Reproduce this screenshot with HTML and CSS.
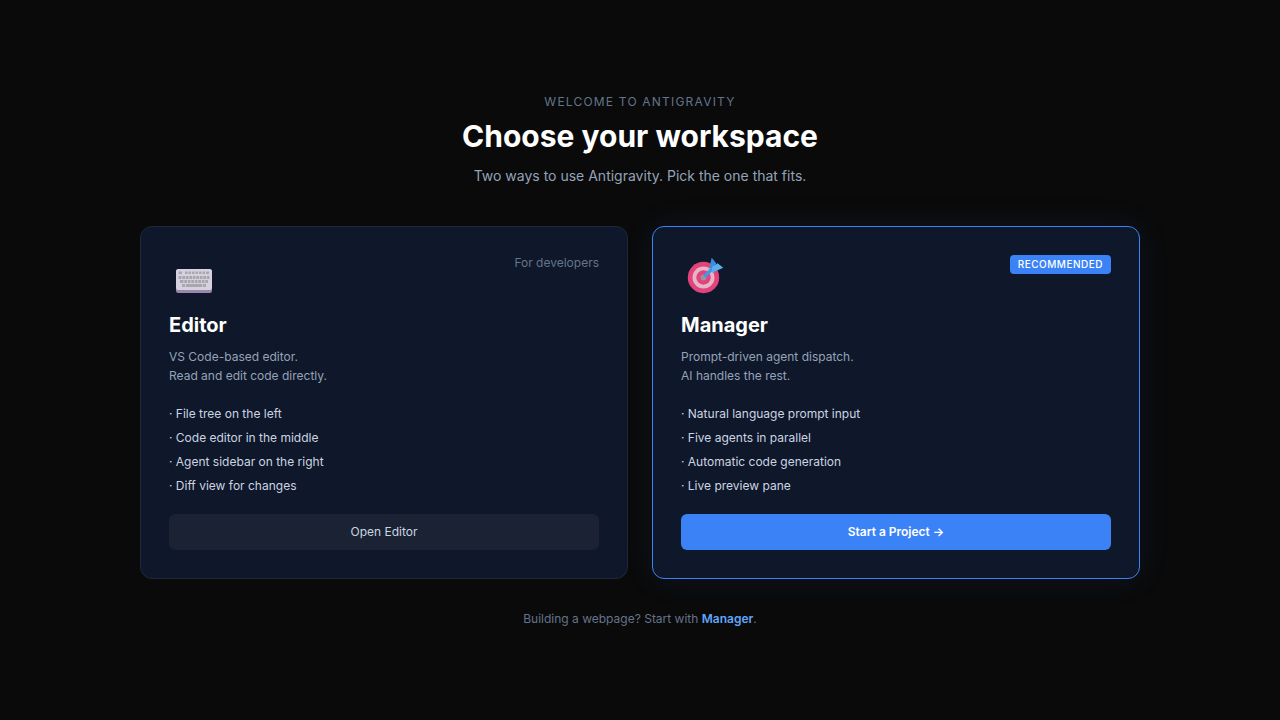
FILE: index.html
```html
<!DOCTYPE html>
<html lang="en">
<head>
<meta charset="utf-8">
<title>Choose your workspace</title>
<link rel="stylesheet" href="styles.css">
</head>
<body>
<main class="page">
  <header class="head">
    <p class="eyebrow">WELCOME TO ANTIGRAVITY</p>
    <h1 class="title">Choose your workspace</h1>
    <p class="sub">Two ways to use Antigravity. Pick the one that fits.</p>
  </header>
  <section class="cards">
    <article class="card">
      <div class="card-top">
        <svg class="icon" viewBox="0 0 44 44" aria-hidden="true">
          <rect x="7" y="14" width="36" height="24" rx="2.5" fill="#9a88ac"/>
          <rect x="7" y="14" width="36" height="21" rx="2.5" fill="#d6d1df"/>
          <g fill="#a9a6ae">
            <rect x="9.5" y="16.5" width="3.5" height="2.5"/><rect x="16" y="16.5" width="2.5" height="2.5"/><rect x="19.5" y="16.5" width="2.5" height="2.5"/><rect x="23" y="16.5" width="2.5" height="2.5"/><rect x="26.5" y="16.5" width="2.5" height="2.5"/><rect x="30" y="16.5" width="2.5" height="2.5"/><rect x="33.5" y="16.5" width="2.5" height="2.5"/><rect x="37" y="16.5" width="3" height="2.5"/>
            <rect x="9.5" y="21" width="31" height="3"/>
            <rect x="11" y="25" width="28" height="3"/>
            <rect x="13" y="29" width="24" height="3"/>
          </g>
          <g fill="#d6d1df">
            <rect x="12.5" y="21" width=".8" height="3"/><rect x="16" y="21" width=".8" height="3"/><rect x="19.5" y="21" width=".8" height="3"/><rect x="23" y="21" width=".8" height="3"/><rect x="26.5" y="21" width=".8" height="3"/><rect x="30" y="21" width=".8" height="3"/><rect x="33.5" y="21" width=".8" height="3"/><rect x="37" y="21" width=".8" height="3"/>
            <rect x="14.5" y="25" width=".8" height="3"/><rect x="18" y="25" width=".8" height="3"/><rect x="21.5" y="25" width=".8" height="3"/><rect x="25" y="25" width=".8" height="3"/><rect x="28.5" y="25" width=".8" height="3"/><rect x="32" y="25" width=".8" height="3"/><rect x="35.5" y="25" width=".8" height="3"/>
            <rect x="16" y="29" width=".8" height="3"/><rect x="33" y="29" width=".8" height="3"/>
          </g>
        </svg>
        <span class="tag">For developers</span>
      </div>
      <h2 class="name">Editor</h2>
      <p class="desc">VS Code-based editor.<br>Read and edit code directly.</p>
      <ul class="list">
        <li>· File tree on the left</li>
        <li>· Code editor in the middle</li>
        <li>· Agent sidebar on the right</li>
        <li>· Diff view for changes</li>
      </ul>
      <button class="btn btn-ghost" type="button">Open Editor</button>
    </article>
    <article class="card card-main">
      <div class="card-top">
        <svg class="icon" viewBox="0 0 44 44" aria-hidden="true">
          <circle cx="22.5" cy="22.5" r="15.7" fill="#e4427a"/>
          <circle cx="22.5" cy="22.5" r="11" fill="#e3b6c8"/>
          <circle cx="22.5" cy="22.5" r="7.2" fill="#e4427a"/>
          <circle cx="22.5" cy="22.5" r="3" fill="#9c929c"/>
          <path d="M24.5 20.5 L33 12" stroke="#3f9be6" stroke-width="3.6" stroke-linecap="round"/>
          <path d="M28.3 13 L30.7 2.7 L35.2 8.2 L32.5 14 Z" fill="#3a8fdc"/>
          <path d="M31 17.8 L42.3 12.7 L36.6 8.2 L31 12 Z" fill="#56b0ee"/>
        </svg>
        <span class="badge">RECOMMENDED</span>
      </div>
      <h2 class="name">Manager</h2>
      <p class="desc">Prompt-driven agent dispatch.<br>AI handles the rest.</p>
      <ul class="list">
        <li>· Natural language prompt input</li>
        <li>· Five agents in parallel</li>
        <li>· Automatic code generation</li>
        <li>· Live preview pane</li>
      </ul>
      <button class="btn btn-primary" type="button">Start a Project →</button>
    </article>
  </section>
  <p class="foot">Building a webpage? Start with <strong class="foot-link">Manager</strong>.</p>
</main>
</body>
</html>
```
FILE: styles.css
```css
* { box-sizing: border-box; margin: 0; padding: 0; }
html { background: #0a0a0a; }
body {
  background: #0a0a0a;
  color: #fff;
  font-family: Inter, "Liberation Sans", sans-serif;
}
.page {
  min-height: 720px;
  display: flex;
  flex-direction: column;
  align-items: center;
  padding-top: 94px;
}
.head { text-align: center; margin-bottom: 40px; }
.eyebrow {
  font-size: 12px;
  line-height: 15px;
  letter-spacing: 1.2px;
  color: #64748b;
  margin-bottom: 8px;
}
.title {
  font-size: 30px;
  line-height: 38px;
  font-weight: 700;
  margin-bottom: 10px;
}
.sub { font-size: 14px; line-height: 21px; color: #94a3b8; }
.cards { display: flex; gap: 24px; width: 1000px; }
.card {
  flex: 1;
  height: 353px;
  padding: 28px;
  background: #0f172a;
  border: 1px solid #1e293b;
  border-radius: 12px;
  display: flex;
  flex-direction: column;
}
.card-main {
  border-color: #3b82f6;
  box-shadow: 0 0 32px rgba(59, 130, 246, 0.1);
}
.card-top {
  display: flex;
  justify-content: space-between;
  align-items: flex-start;
  height: 44px;
  margin-bottom: 12px;
}
.icon { width: 44px; height: 44px; display: block; }
.tag { font-size: 12px; line-height: 16px; color: #64748b; }
.badge {
  font-size: 10px;
  line-height: 15px;
  font-weight: 500;
  letter-spacing: .5px;
  color: #fff;
  background: #3b82f6;
  border-radius: 4px;
  padding: 2px 8px;
}
.name { font-size: 20px; line-height: 28px; font-weight: 700; margin-bottom: 8px; }
.desc { font-size: 12px; line-height: 19.2px; color: #94a3b8; margin-bottom: 16.2px; }
.list { list-style: none; margin-bottom: 16px; }
.list li { font-size: 12px; line-height: 16px; color: #cbd5e1; padding: 4px 0; }
.btn {
  height: 36px;
  width: 100%;
  border: 0;
  border-radius: 6px;
  font-family: inherit;
  font-size: 12px;
}
.btn-ghost { background: #1a2234; color: #cbd5e1; font-weight: 400; }
.btn-primary { background: #3b82f6; color: #fff; font-weight: 600; }
.foot { margin-top: 32px; font-size: 12px; line-height: 16px; color: #64748b; }
.foot-link { color: #60a5fa; font-weight: 600; }
```
